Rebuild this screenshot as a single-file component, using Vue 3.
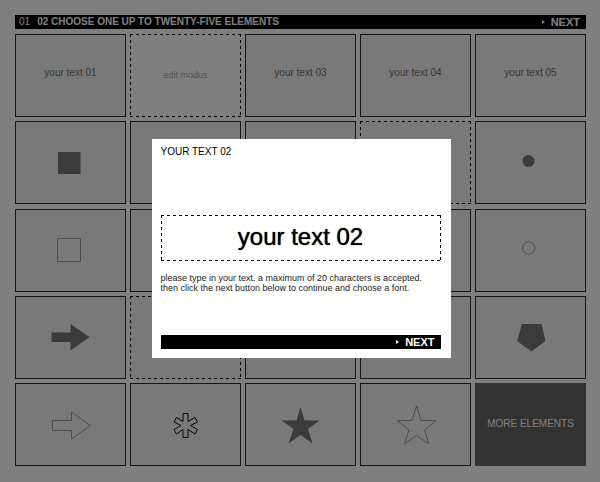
<template>
  <main class="page">
    <header class="bar">
      <h1 class="bar-title"><span class="step">01</span>02 CHOOSE ONE UP TO TWENTY-FIVE ELEMENTS</h1>
      <button type="button" class="next">
        <svg class="caret" viewBox="0 0 3 4" aria-hidden="true"><path d="M0 0L3 2L0 4Z" /></svg>NEXT
      </button>
    </header>

    <div class="grid">
      <button
        v-for="cell in cells"
        :key="cell.id"
        type="button"
        class="cell"
        :class="cell.type"
        :aria-label="cell.text || cell.shape || 'element ' + cell.id"
      >
        <span v-if="cell.text">{{ cell.text }}</span>
        <svg
          v-else-if="cell.shape"
          class="shape"
          :class="cell.style"
          viewBox="0 0 42 42"
          aria-hidden="true"
        >
          <path :d="shapes[cell.shape]" />
        </svg>
      </button>
    </div>
  </main>

  <div v-if="isOpen" class="backdrop" @click="closePopup">
    <form class="popup" role="dialog" aria-labelledby="popup-title" @click.stop @submit.prevent="saveText">
      <h2 id="popup-title"><label for="popup-text">YOUR TEXT 02</label></h2>
      <input id="popup-text" v-model="draft" class="field dashed" type="text" maxlength="20" autocomplete="off" spellcheck="false" />
      <p class="help">
        please type in your text. a maximum of 20 characters is accepted.<br />
        then click the next button below to continue and choose a font.
      </p>
      <div class="bar bar-end">
        <button type="submit" class="next">
          <svg class="caret" viewBox="0 0 3 4" aria-hidden="true"><path d="M0 0L3 2L0 4Z" /></svg>NEXT
        </button>
      </div>
    </form>
  </div>
</template>

<script setup>
import { ref } from 'vue';

const isOpen = ref(true);
const draft = ref('your text 02');

const shapes = {
  square: 'M8 10H30.500V32H8Z',
  box: 'M7.500 9.500H30.500V32.500H7.500Z',
  dot: 'M12.500 19a6 6 0 1 0 12 0a6 6 0 1 0 -12 0Z',
  circle: 'M12.500 19a6.200 6.200 0 1 0 12.400 0a6.200 6.200 0 1 0 -12.400 0Z',
  arrow: 'M1.500 16.500H20.500V8L39.500 21L20.500 34.500V26H1.500Z',
  'arrow outline': 'M2.500 16.500H21.500V8L40.500 21.500L21.500 35V26.500H2.500Z',
  asterisk:
    'M18 9.500H23V17.500L30 13.500L32.500 18L25.500 21.500L32.500 25.500L30 30L23 25.500V33.500H18V25.500L11.500 30L9 25.500L16 21.500L9 18L11.500 13.500L18 17.500Z',
  star: 'M20.500 3L24.500 16.500H39.500L28 25L32.500 39.500L20.500 31L8.500 39.500L13.500 25L1.500 16.500H16.500Z',
  'star outline': 'M21.500 2L26 16.500H41L29.500 26L34 40L21.500 31.500L9.500 40L14 26L2 16.500H17Z',
  pentagon: 'M12 8H31.500L35.500 25L21.500 35.500L7 25Z',
};

const cells = ref([
  { id: 1, text: 'your text 01' },
  { id: 2, text: 'edit modus', type: 'dashed edit' },
  { id: 3, text: 'your text 03' },
  { id: 4, text: 'your text 04' },
  { id: 5, text: 'your text 05' },
  { id: 6, shape: 'square' },
  { id: 7 },
  { id: 8 },
  { id: 9, type: 'dashed' },
  { id: 10, shape: 'dot' },
  { id: 11, shape: 'box', style: 'outline' },
  { id: 12 },
  { id: 13 },
  { id: 14 },
  { id: 15, shape: 'circle', style: 'outline' },
  { id: 16, shape: 'arrow' },
  { id: 17, type: 'dashed' },
  { id: 18 },
  { id: 19 },
  { id: 20, shape: 'pentagon' },
  { id: 21, shape: 'arrow outline', style: 'outline' },
  { id: 22, shape: 'asterisk', style: 'outline strong' },
  { id: 23, shape: 'star' },
  { id: 24, shape: 'star outline', style: 'outline' },
  { id: 25, text: 'MORE ELEMENTS', type: 'more' },
]);

const closePopup = () => {
  isOpen.value = false;
};

const saveText = () => {
  cells.value[1].text = draft.value;
  closePopup();
};
</script>

<style>
body {
  margin: 0;
  background: #fff;
}
</style>

<style scoped>
.page,
.popup {
  font-family: "Liberation Sans", Arial, Helvetica, sans-serif;
}
.page {
  padding: 15px 14px 15px 15px;
}
button,
input {
  margin: 0;
  padding: 0;
  border: 0;
  border-radius: 0;
  background: none;
  font: inherit;
  color: inherit;
}
button {
  cursor: pointer;
}
.bar {
  display: flex;
  justify-content: space-between;
  align-items: center;
  height: 14px;
  padding: 0 6px 0 4px;
  background: #000;
  color: #fff;
  font-size: 11px;
  line-height: 14px;
}
.bar-end {
  justify-content: flex-end;
}
.bar-title {
  margin: 0;
  font-size: 10px;
  font-weight: bold;
}
.step {
  margin-right: 7px;
  font-weight: normal;
}
.next {
  display: flex;
  align-items: center;
  gap: 6px;
  font-weight: bold;
}
.caret {
  width: 3px;
  height: 4px;
  fill: currentColor;
}
.grid {
  display: grid;
  grid-template-columns: repeat(5, 1fr);
  grid-auto-rows: 83px;
  column-gap: 4px;
  align-content: space-between;
  min-height: 432px;
  margin-top: 5px;
}
.cell {
  display: flex;
  justify-content: center;
  align-items: center;
  padding-bottom: 6px;
  border: 1px solid #2c2c2c;
  background-color: #f2f2f2;
  color: #707070;
  font-size: 10px;
}
.dashed {
  border: 0;
  background-image:
    repeating-linear-gradient(90deg, #000 0 3px, transparent 3px 6px),
    repeating-linear-gradient(90deg, #000 0 3px, transparent 3px 6px),
    repeating-linear-gradient(#000 0 3px, transparent 3px 6px),
    repeating-linear-gradient(#000 0 3px, transparent 3px 6px);
  background-position: top, bottom, left, right;
  background-repeat: no-repeat;
  background-size: 100% 1px, 100% 1px, 1px 100%, 1px 100%;
}
.edit {
  padding-bottom: 2px;
  background-color: #fff;
  color: #a0a0a0;
  font-size: 9px;
}
.more {
  padding-bottom: 2px;
  border-color: #666;
  background: #666;
  color: #fff;
}
.shape {
  width: 42px;
  height: 42px;
  margin-top: 6px;
  fill: #777;
}
.outline {
  fill: none;
  stroke: #999;
}
.strong {
  stroke: #111;
}
.backdrop {
  position: fixed;
  inset: 0;
  display: flex;
  justify-content: center;
  align-items: center;
  padding: 15px 0 0 2px;
  background: rgba(0, 0, 0, 0.5);
}
.popup {
  width: 50%;
  box-sizing: border-box;
  padding: 6px 10px 9px 9px;
  background: #fff;
  color: #000;
}
.popup h2 {
  margin: 0;
  font-size: 10px;
  line-height: 14px;
  font-weight: normal;
}
.field {
  display: block;
  width: 100%;
  height: 46px;
  padding-bottom: 2px;
  box-sizing: border-box;
  margin-top: 56px;
  text-align: center;
  font-size: 24px;
  text-shadow: 0 0 1px currentColor;
  outline: none;
}
.help {
  margin: 12px 0 42px;
  color: #222;
  font-size: 9px;
  line-height: 10px;
}
</style>
